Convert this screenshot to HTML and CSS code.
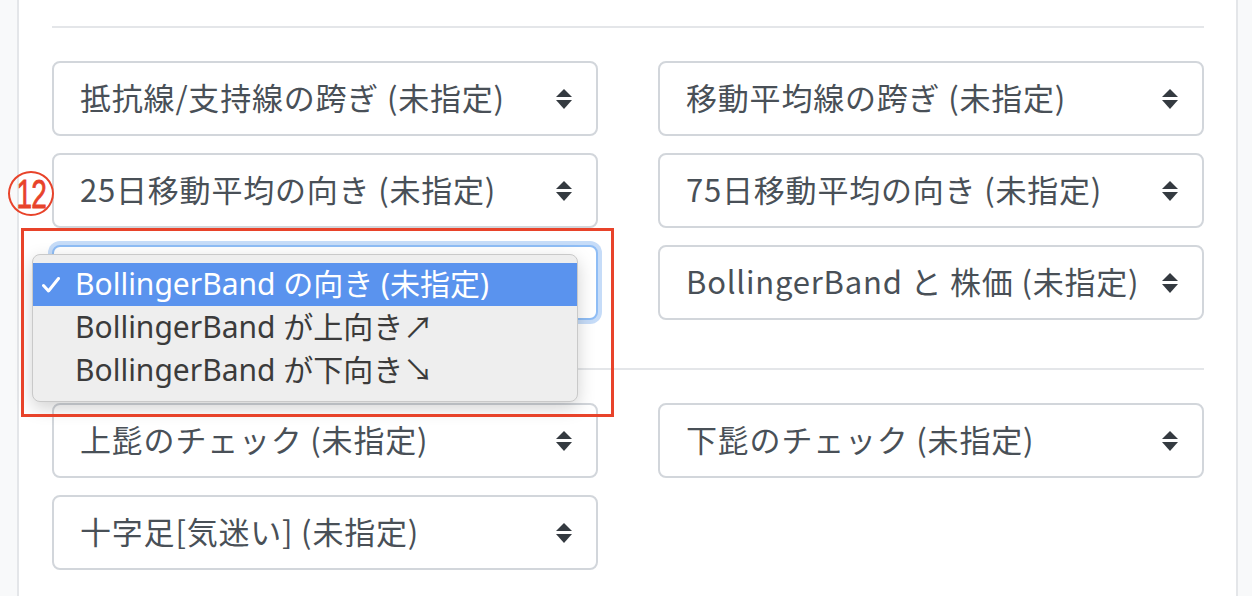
FILE: index.html
```html
<!DOCTYPE html>
<html lang="ja">
<head>
<meta charset="utf-8">
<title>Filters</title>
<link rel="stylesheet" href="styles.css">
</head>
<body>
<div class="page">
  <div class="card">
    <div class="rule"></div>
    <div class="grid">
      <div class="sel"><span>抵抗線/支持線の跨ぎ (未指定)</span><svg class="caret" viewBox="0 0 16 20"><polygon points="0,8 8,0 16,8"/><polygon points="0,11 16,11 8,20"/></svg></div>
      <div class="sel"><span>移動平均線の跨ぎ (未指定)</span><svg class="caret" viewBox="0 0 16 20"><polygon points="0,8 8,0 16,8"/><polygon points="0,11 16,11 8,20"/></svg></div>
      <div class="sel"><span>25日移動平均の向き (未指定)</span><svg class="caret" viewBox="0 0 16 20"><polygon points="0,8 8,0 16,8"/><polygon points="0,11 16,11 8,20"/></svg></div>
      <div class="sel"><span>75日移動平均の向き (未指定)</span><svg class="caret" viewBox="0 0 16 20"><polygon points="0,8 8,0 16,8"/><polygon points="0,11 16,11 8,20"/></svg></div>
      <div class="sel focus"></div>
      <div class="sel"><span>BollingerBand と 株価 (未指定)</span><svg class="caret" viewBox="0 0 16 20"><polygon points="0,8 8,0 16,8"/><polygon points="0,11 16,11 8,20"/></svg></div>
    </div>
    <div class="rule mid"></div>
    <div class="grid">
      <div class="sel"><span>上髭のチェック (未指定)</span><svg class="caret" viewBox="0 0 16 20"><polygon points="0,8 8,0 16,8"/><polygon points="0,11 16,11 8,20"/></svg></div>
      <div class="sel"><span>下髭のチェック (未指定)</span><svg class="caret" viewBox="0 0 16 20"><polygon points="0,8 8,0 16,8"/><polygon points="0,11 16,11 8,20"/></svg></div>
      <div class="sel"><span>十字足[気迷い] (未指定)</span><svg class="caret" viewBox="0 0 16 20"><polygon points="0,8 8,0 16,8"/><polygon points="0,11 16,11 8,20"/></svg></div>
    </div>
  </div>

  <div class="badge"><span>12</span></div>
  <div class="menu">
    <div class="item active"><svg class="check" viewBox="0 0 18 16"><polyline points="1.5,8.5 6.5,14 16.5,1.5"/></svg>BollingerBand の向き (未指定)</div>
    <div class="item">BollingerBand が上向き↗</div>
    <div class="item">BollingerBand が下向き↘</div>
  </div>
  <div class="highlight"></div>
</div>
</body>
</html>
```

FILE: styles.css
```css
* { box-sizing: border-box; }
html, body {
  margin: 0;
  padding: 0;
  background: #f8f9fa;
  font-family: "Noto Sans CJK JP", "Noto Sans", sans-serif;
}
.page {
  position: relative;
  width: 1252px;
  height: 596px;
  overflow: hidden;
}
.card {
  margin-left: 17px;
  width: 1221px;
  height: 596px;
  background: #fff;
  border-left: 2px solid #e4e6e9;
  border-right: 2px solid #e4e6e9;
  padding: 0 32px 0 33px;
}
.rule {
  height: 2px;
  background: #e4e6e9;
  position: relative;
  top: 26px;
}
.rule.mid {
  top: 0;
  margin-top: 48px;
}
.grid {
  display: grid;
  grid-template-columns: 546px 546px;
  column-gap: 60px;
  row-gap: 17px;
  margin-top: 59px;
}
.rule.mid + .grid {
  margin-top: 33px;
}
.sel {
  height: 75px;
  border: 2px solid #d2d6db;
  border-radius: 8px;
  background: #fff;
  display: flex;
  align-items: center;
  justify-content: space-between;
  padding: 0 24px 4px 26px;
  color: #495057;
  font-size: 31px;
  letter-spacing: 0.8px;
  white-space: nowrap;
}
.sel span { line-height: 1; }
.caret {
  width: 16px;
  height: 20px;
  fill: #343a40;
  flex: none;
  margin-top: 4px;
}
.sel.focus {
  border-color: #8fbdf5;
  box-shadow: 0 0 0 4px #c6dcf8;
}
.badge {
  position: absolute;
  left: 8px;
  top: 171px;
  width: 46px;
  height: 45px;
  border: 2.5px solid #e8432a;
  border-radius: 50%;
  display: flex;
  align-items: center;
  justify-content: center;
  color: #e8432a;
  font-family: "Liberation Sans", sans-serif;
  font-size: 40px;
  line-height: 1;
}
.badge span {
  display: inline-block;
  transform: scaleX(0.7);
  letter-spacing: -1px;
  margin-top: 1px;
  -webkit-text-stroke: 0.8px #e8432a;
}
.menu {
  position: absolute;
  left: 32px;
  top: 254px;
  width: 546px;
  height: 148px;
  padding-top: 8px;
  background: #eeeeee;
  border: 1px solid #c9c9c9;
  border-radius: 8px;
  box-shadow: 0 6px 18px rgba(0, 0, 0, 0.18);
  font-family: "Noto Sans", "Noto Sans CJK JP", sans-serif;
  font-size: 30px;
  color: #3b3b3b;
}
.item {
  height: 43px;
  line-height: 42px;
  padding-left: 42px;
  position: relative;
  white-space: nowrap;
}
.item.active {
  background: #5a93ee;
  color: #fff;
}
.check {
  position: absolute;
  left: 9px;
  top: 14px;
  width: 18px;
  height: 16px;
  fill: none;
  stroke: #fff;
  stroke-width: 3;
  stroke-linecap: round;
  stroke-linejoin: round;
}
.highlight {
  position: absolute;
  left: 21px;
  top: 228px;
  width: 593px;
  height: 189px;
  border: 3px solid #e8432a;
}
```
